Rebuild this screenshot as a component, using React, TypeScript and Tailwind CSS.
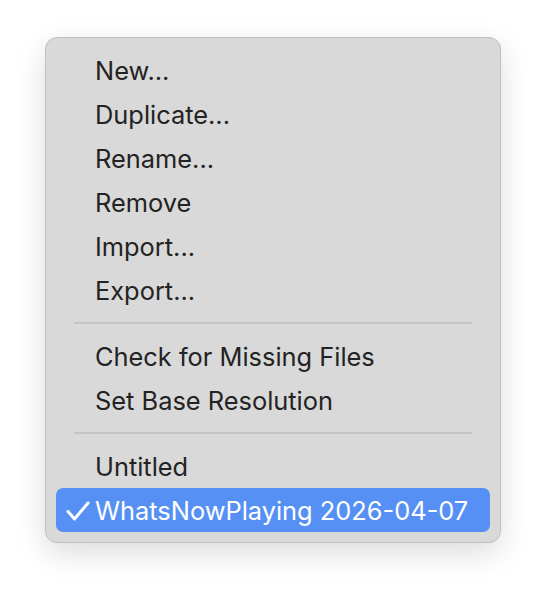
import { Fragment } from 'react';

type Entry = { label: string; checked?: boolean } | 'sep';

const entries: Entry[] = [
  { label: 'New...' },
  { label: 'Duplicate...' },
  { label: 'Rename...' },
  { label: 'Remove' },
  { label: 'Import...' },
  { label: 'Export...' },
  'sep',
  { label: 'Check for Missing Files' },
  { label: 'Set Base Resolution' },
  'sep',
  { label: 'Untitled' },
  { label: 'WhatsNowPlaying 2026-04-07', checked: true },
];

function Check() {
  return (
    <svg width="24" height="20" viewBox="0 0 24 20" fill="none" className="ml-[10px]">
      <path d="M2 10.5 L8.5 18 L22 2" stroke="white" strokeWidth="3" strokeLinecap="round" strokeLinejoin="round" />
    </svg>
  );
}

export default function App() {
  return (
    <div className="min-h-[596px] w-[546px] bg-white pt-[37px] pl-[45px]" style={{ fontFamily: 'Inter, "Noto Sans", sans-serif' }}>
      <div className="w-[456px] rounded-[12px] border border-[#bfbfbf] bg-[#d9d9d9] px-[10px] py-[10px] shadow-[0_10px_30px_rgba(0,0,0,0.14)]">
        {entries.map((e, i) => (
          <Fragment key={i}>
            {e === 'sep' ? (
              <div className="flex h-[22px] items-center px-[18px]">
                <div className="h-[2px] w-full bg-[#c4c4c4]" />
              </div>
            ) : (
              <div
                className={`flex h-[44px] items-center rounded-[7px] pt-[2px] text-[25.4px] ${
                  e.checked ? 'bg-[#5690f4] text-white' : 'text-[#232323]'
                }`}
              >
                <span className="flex w-[39px] items-center">{e.checked ? <Check /> : null}</span>
                <span>{e.label}</span>
              </div>
            )}
          </Fragment>
        ))}
      </div>
    </div>
  );
}
